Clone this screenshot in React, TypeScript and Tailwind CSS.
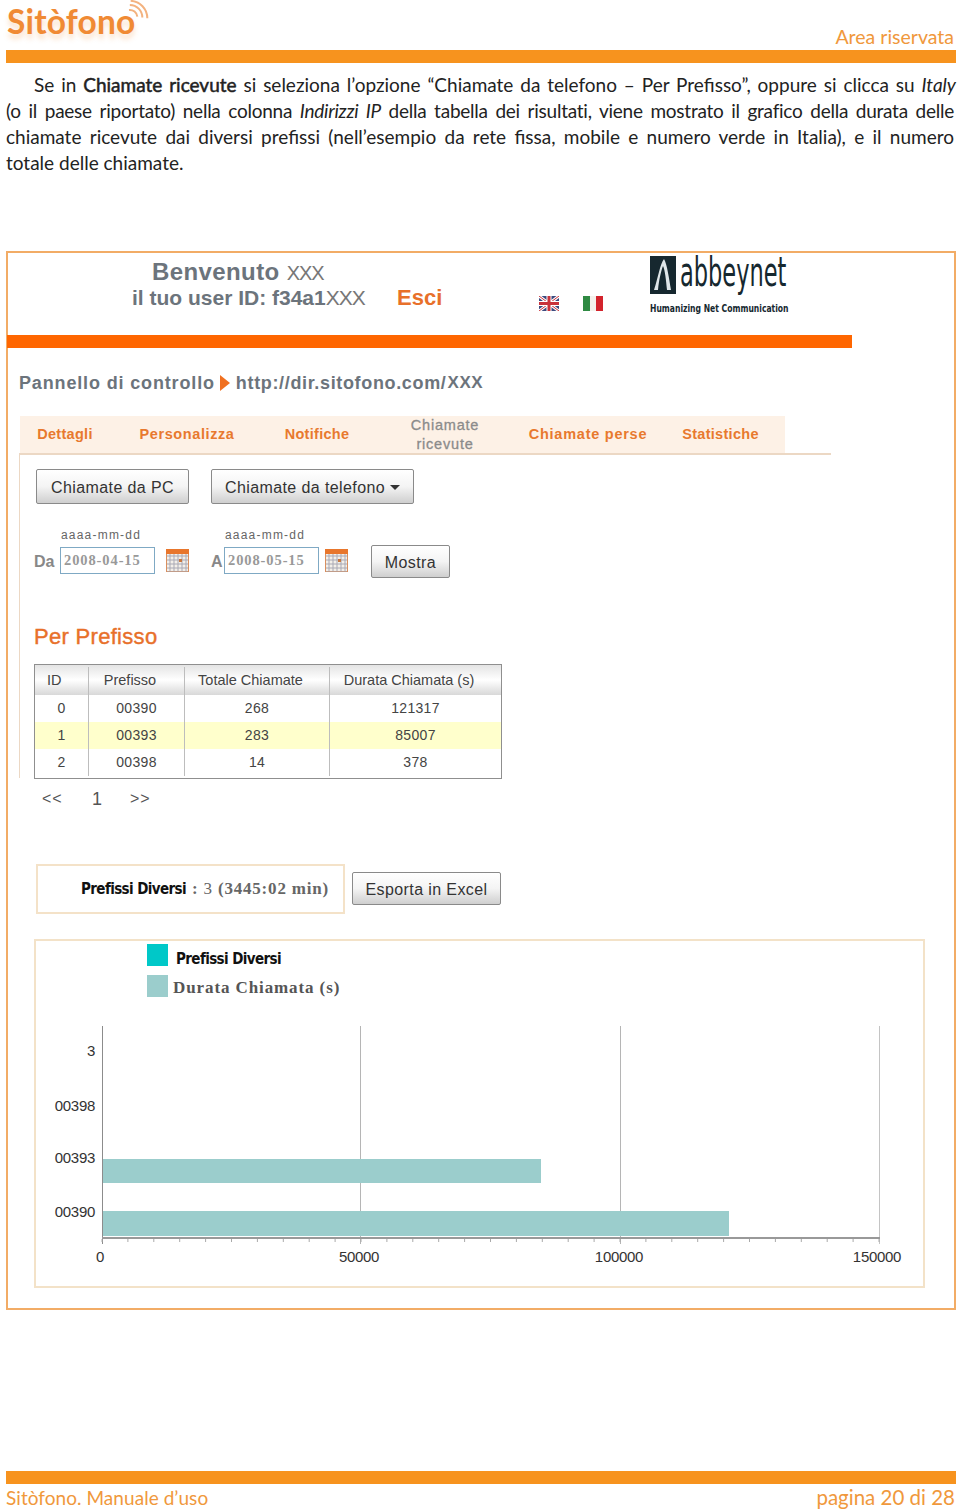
import React from "react";

const arial = "font-['Liberation_Sans',Arial,sans-serif]";

function Calendar() {
  const lines = [4, 8, 12, 16, 20];
  return (
    <svg width="23" height="23" viewBox="0 0 23 23" className="block shrink-0">
      <rect x="0.5" y="0.5" width="22" height="22" fill="#f3efe9" stroke="#d98f5f" />
      <rect x="0" y="0" width="23" height="5" fill="#e8762c" />
      {lines.map((l) => (
        <line key={"h" + l} x1="1" x2="22" y1={l + 3} y2={l + 3} stroke="#a9a9b5" strokeWidth="1" />
      ))}
      {lines.map((l) => (
        <line key={"v" + l} x1={l} x2={l} y1="5" y2="22" stroke="#a9a9b5" strokeWidth="1" />
      ))}
      <rect x="13" y="10" width="3" height="3" fill="#c9783f" />
    </svg>
  );
}

function Btn({ children, className }: { children: React.ReactNode; className: string }) {
  return (
    <div
      className={`flex items-center justify-center shrink-0 pt-[2px] rounded-[2px] border border-[#8a8a8a] bg-gradient-to-b from-white via-[#f4f4f4] to-[#cfcfcf] text-[16px] tracking-[0.4px] text-[#333] ${arial} ${className}`}
    >
      {children}
    </div>
  );
}

const Row = ({ cells, bg }: { cells: string[]; bg: string }) => (
  <div className={`grid grid-cols-[54px_96px_145px_171px] h-[27px] text-[14px] tracking-[0.3px] text-[#444] ${bg}`}>
    {cells.map((c, i) => (
      <div key={i} className={`flex items-center justify-center ${i < 3 ? "border-r border-[#bdbdbd]" : ""}`}>
        {c}
      </div>
    ))}
  </div>
);

function Chart() {
  const ticks = Array.from({ length: 31 }, (_, i) => 102 + i * 25.9);
  const t = "fill-[#333] text-[15px] tracking-[-0.3px]";
  return (
    <svg viewBox="36 1020 889 262" width="889" height="262" className={`block ${arial}`}>
      <line x1="360.5" x2="360.5" y1="1026" y2="1244" stroke="#b5b5b5" />
      <line x1="620.5" x2="620.5" y1="1026" y2="1244" stroke="#b5b5b5" />
      <line x1="879.5" x2="879.5" y1="1026" y2="1244" stroke="#c4c4c4" />
      <rect x="102" y="1159" width="439" height="24" fill="#9bcdcc" />
      <rect x="102" y="1211" width="627" height="25" fill="#9bcdcc" />
      <line x1="102.5" x2="102.5" y1="1026" y2="1244" stroke="#8c8c8c" />
      <rect x="102" y="1237" width="778" height="2" fill="#999" />
      {ticks.map((x) => (
        <line key={x} x1={x} x2={x} y1="1239" y2="1242" stroke="#aaa" />
      ))}
      <text x="95" y="1056" textAnchor="end" className={t}>3</text>
      <text x="95" y="1111" textAnchor="end" className={t}>00398</text>
      <text x="95" y="1163" textAnchor="end" className={t}>00393</text>
      <text x="95" y="1217" textAnchor="end" className={t}>00390</text>
      <text x="100" y="1262" textAnchor="middle" className={t}>0</text>
      <text x="359" y="1262" textAnchor="middle" className={t}>50000</text>
      <text x="619" y="1262" textAnchor="middle" className={t}>100000</text>
      <text x="877" y="1262" textAnchor="middle" className={t}>150000</text>
    </svg>
  );
}

export default function App() {
  return (
    <div className="w-[960px] h-[1511px] overflow-hidden bg-white pl-[6px] pr-[4px] font-['Lato','Noto_Sans',sans-serif] text-[#222]">
      {/* Page header */}
      <div className="h-[50px] flex justify-between items-end">
        <div className="relative w-[145px] h-[50px]">
          <div className="font-['Lato',sans-serif] font-bold text-[33.5px] leading-[40px] pt-[1px] pl-[1px] text-[#f08a34] tracking-[0.2px] [text-shadow:0_5px_5px_rgba(240,138,52,0.25)]">
            Sitòfono
          </div>
          <svg width="25" height="25" viewBox="0 0 30 30" className="absolute left-[118px] top-0" fill="none" stroke="#f3b27f" strokeWidth="2.4">
            <path d="M6 12a9 9 0 0 1 10 8" />
            <path d="M7 6a15 15 0 0 1 15 15" />
            <path d="M8 1a21 21 0 0 1 20 21" />
          </svg>
        </div>
        <div className="text-[19.5px] leading-[24px] mb-[1px] text-[#f0983c] pr-[2px]">Area riservata</div>
      </div>
      <div className="h-[13px] bg-[#f7931e]" />

      {/* Body copy */}
      <div className="mt-[9px] pr-[2px] text-[19px] leading-[26px] text-[#222] whitespace-nowrap">
        <div className="pl-[28px] -mr-[2px] [text-align:justify] [text-align-last:justify] whitespace-normal">
          Se in <span className="[-webkit-text-stroke:0.5px_#222]">Chiamate ricevute</span> si seleziona l’opzione “Chiamate da telefono – Per Prefisso”, oppure si clicca su <i>Italy</i>
        </div>
        <div className="[text-align:justify] [text-align-last:justify] whitespace-normal tracking-[-0.25px]">
          (o il paese riportato) nella colonna <i>Indirizzi IP</i> della tabella dei risultati, viene mostrato il grafico della durata delle
        </div>
        <div className="[text-align:justify] [text-align-last:justify] whitespace-normal">
          chiamate ricevute dai diversi prefissi (nell’esempio da rete fissa, mobile e numero verde in Italia), e il numero
        </div>
        <div>totale delle chiamate.</div>
      </div>

      {/* Embedded screenshot frame */}
      <div className={`mt-[75px] h-[1059px] border-2 border-[#f2ac66] ${arial}`}>
        <div className="h-[82px] flex">
          <div className="w-[124px] shrink-0" />
          <div className="w-[272px] shrink-0 pt-[5px] text-[#6c747c] font-bold whitespace-nowrap">
            <div className="pl-[20px] text-[24px] leading-[28px] tracking-[0.4px]">
              Benvenuto <span className="font-normal text-[20px] tracking-[-1px] text-[#777]">XXX</span>
            </div>
            <div className="text-[21px] leading-[25px] -mt-[2px]">
              il tuo user ID: f34a1<span className="font-normal tracking-[-1px] text-[#777]">XXX</span>
            </div>
          </div>
          <div className="pt-[32px] text-[22px] leading-[26px] font-bold text-[#e8702a] w-[142px] -ml-[7px] shrink-0">Esci</div>
          <div className="flex gap-[24px] pt-[43px] w-[111px] shrink-0">
            <svg width="20" height="15" viewBox="0 0 20 15" className="block shrink-0">
              <rect width="20" height="15" fill="#3c4a7e" />
              <path d="M0 0L20 15M20 0L0 15" stroke="#fff" strokeWidth="3" />
              <path d="M0 0L20 15M20 0L0 15" stroke="#c9323a" strokeWidth="1" />
              <path d="M10 0V15M0 7.5H20" stroke="#fff" strokeWidth="5" />
              <path d="M10 0V15M0 7.5H20" stroke="#c9323a" strokeWidth="3" />
            </svg>
            <svg width="20" height="15" viewBox="0 0 20 15" className="block shrink-0">
              <rect width="7" height="15" fill="#2f8a43" />
              <rect x="7" width="6" height="15" fill="#f4f1ec" />
              <rect x="13" width="7" height="15" fill="#d3232c" />
            </svg>
          </div>
          <div className="w-[140px] shrink-0 pt-[3px]">
            <div className="flex items-start h-[43px]">
              <svg width="26" height="38" viewBox="0 0 26 38" className="block shrink-0">
                <rect width="26" height="38" fill="#16282f" />
                <path d="M4 34C8 22 10 8 14 3C17 8 19 22 21 34L17 34C16 24 15 14 13 10C11 15 9 24 8 34Z" fill="#dfe6e8" />
              </svg>
              <div className="font-['DejaVu_Sans_Condensed',sans-serif] text-[25px] leading-[28px] text-[#16282f] origin-top-left scale-y-[1.6] ml-[4px] -mt-[5px]">
                abbeynet
              </div>
            </div>
            <div className="font-['DejaVu_Sans_Condensed',sans-serif] font-bold text-[8.5px] leading-[14px] whitespace-nowrap text-[#16282f] origin-top-left scale-y-[1.3]">
              Humanizing Net Communication
            </div>
          </div>
        </div>

        <div className="h-[13px] w-[845px] -ml-px bg-[#ff6600]" />

        <div className="mt-[24px] ml-[11px] h-[22px] flex items-center font-bold text-[18px] text-[#6c747c] whitespace-nowrap">
          <span className="tracking-[0.85px]">Pannello di controllo</span>
          <svg width="10" height="16" viewBox="0 0 10 16" className="block ml-[5px] mr-[6px] shrink-0">
            <path d="M0 0L10 8L0 16Z" fill="#f07020" />
          </svg>
          <span className="tracking-[0.65px]">http://dir.sitofono.com/</span>
          <span className="text-[17px] tracking-[0.6px] ml-[1px]">XXX</span>
        </div>

        {/* Tabs */}
        <div className="mt-[22px] ml-[12px] w-[765px] h-[37px] flex bg-[#fdf1e6] text-[14.5px] font-bold text-[#e8792e] tracking-[0.3px]">
          <div className="w-[90px] flex items-center justify-center">Dettagli</div>
          <div className="w-[154px] flex items-center justify-center tracking-[0.6px]">Personalizza</div>
          <div className="w-[106px] flex items-center justify-center">Notifiche</div>
          <div className="w-[150px] flex items-center justify-center text-center text-[#8b8b8b] font-normal tracking-[0.8px] [-webkit-text-stroke:0.3px_#8b8b8b] leading-[19px]">
            Chiamate<br />ricevute
          </div>
          <div className="w-[136px] flex items-center justify-center tracking-[0.75px]">Chiamate perse</div>
          <div className="w-[129px] flex items-center justify-center">Statistiche</div>
        </div>

        {/* Tab panel */}
        <div className="ml-[11px] w-[812px] h-[325px] border-t-2 border-l border-[#ecd8c4]">
          <div className="pl-[16px] pt-[14px] flex gap-[22px]">
            <Btn className="w-[153px] h-[35px]">Chiamate da PC</Btn>
            <Btn className="w-[203px] h-[35px]">
              Chiamate da telefono
              <svg width="10" height="5" viewBox="0 0 10 5" className="ml-[5px] block">
                <path d="M0 0H10L5 5Z" fill="#333" />
              </svg>
            </Btn>
          </div>

          <div className="mt-[24px] pl-[14px] flex items-start">
            <div className="w-[26px] mt-[24px] text-[16px] leading-[20px] font-bold text-[#888]">Da</div>
            <div className="w-[95px]">
              <div className="h-[19px] pl-px text-[12px] leading-[14px] tracking-[1.2px] text-[#666]">aaaa-mm-dd</div>
              <div className="h-[27px] border border-[#7fa9c4] pl-[3px] flex items-center font-['Liberation_Serif',serif] font-bold text-[14.5px] tracking-[0.9px] text-[#999]">
                2008-04-15
              </div>
            </div>
            <div className="ml-[11px] mt-[21px]"><Calendar /></div>
            <div className="ml-[22px] w-[13px] mt-[24px] text-[16px] leading-[20px] font-bold text-[#888]">A</div>
            <div className="w-[95px]">
              <div className="h-[19px] pl-px text-[12px] leading-[14px] tracking-[1.2px] text-[#666]">aaaa-mm-dd</div>
              <div className="h-[27px] border border-[#7fa9c4] pl-[3px] flex items-center font-['Liberation_Serif',serif] font-bold text-[14.5px] tracking-[0.9px] text-[#999]">
                2008-05-15
              </div>
            </div>
            <div className="ml-[6px] mt-[21px]"><Calendar /></div>
            <Btn className="ml-[23px] mt-[17px] w-[79px] h-[33px]">Mostra</Btn>
          </div>

          <div className="mt-[46px] pl-[14px] h-[26px] text-[22px] leading-[26px] text-[#e8702a] [-webkit-text-stroke:0.4px_#e8702a] tracking-[0.3px]">
            Per Prefisso
          </div>

          <div className="mt-[14px] ml-[14px] w-[468px] pb-[2px] border border-[#8f8f8f] text-[#444]">
            <div className="grid grid-cols-[54px_96px_145px_171px] h-[30px] pt-[2px] text-[14.5px] bg-gradient-to-b from-[#e4e4e4] via-white to-[#d8d8d8]">
              <div className="flex items-center pl-[12px] border-r border-[#bdbdbd]">ID</div>
              <div className="flex items-center justify-center pr-[13px] border-r border-[#bdbdbd]">Prefisso</div>
              <div className="flex items-center justify-center pr-[13px] border-r border-[#bdbdbd]">Totale Chiamate</div>
              <div className="flex items-center justify-center pr-[13px]">Durata Chiamata (s)</div>
            </div>
            <Row cells={["0", "00390", "268", "121317"]} bg="bg-white" />
            <Row cells={["1", "00393", "283", "85007"]} bg="bg-[#ffffcc]" />
            <Row cells={["2", "00398", "14", "378"]} bg="bg-white" />
          </div>
        </div>

        {/* Pager */}
        <div className="ml-[34px] mt-[10px] h-[22px] flex items-center text-[16px] text-[#555]">
          <span className="w-[50px] tracking-[1px]">&lt;&lt;</span>
          <span className="w-[38px] text-[18px]">1</span>
          <span className="tracking-[1px]">&gt;&gt;</span>
        </div>

        {/* Summary */}
        <div className="mt-[54px] ml-[28px] flex items-start">
          <div className="w-[309px] h-[50px] border-2 border-[#f4e2c8] flex items-center pl-[43px] whitespace-nowrap">
            <span className="font-['DejaVu_Sans_Condensed',sans-serif] font-bold text-[15px] tracking-[-0.6px] text-[#111]">Prefissi Diversi</span>
            <span className="font-['Liberation_Serif',serif] font-bold text-[17px] text-[#666] ml-[6px] tracking-[0.8px]">
              : <span className="font-normal">3</span> (3445:02 min)
            </span>
          </div>
          <Btn className="ml-[7px] mt-[8px] w-[149px] h-[33px]">Esporta in Excel</Btn>
        </div>

        {/* Chart card */}
        <div className="mt-[25px] ml-[26px] w-[891px] h-[349px] border-2 border-[#f3e2c8]">
          <div className="pl-[111px] pt-[3px] flex flex-col gap-[9px]">
            <div className="flex items-center h-[22px]">
              <div className="w-[21px] h-[22px] bg-[#00c8c8]" />
              <div className="ml-[8px] pt-[8px] font-['DejaVu_Sans_Condensed',sans-serif] font-bold text-[15px] tracking-[-0.6px] text-[#111]">Prefissi Diversi</div>
            </div>
            <div className="flex items-center h-[22px]">
              <div className="w-[21px] h-[22px] bg-[#9bcdcc]" />
              <div className="ml-[5px] pt-[4px] font-['Liberation_Serif',serif] font-bold text-[17px] tracking-[0.9px] text-[#555]">Durata Chiamata (s)</div>
            </div>
          </div>
          <div className="mt-[23px]">
            <Chart />
          </div>
        </div>
      </div>

      {/* Page footer */}
      <div className="mt-[161px] h-[13px] bg-[#f7931e]" />
      <div className="flex justify-between items-baseline text-[#f0983c] leading-[26px]">
        <span className="text-[19px] tracking-[0.05px]">Sitòfono. Manuale d’uso</span>
        <span className="text-[20.5px] pr-px">pagina 20 di 28</span>
      </div>
    </div>
  );
}
